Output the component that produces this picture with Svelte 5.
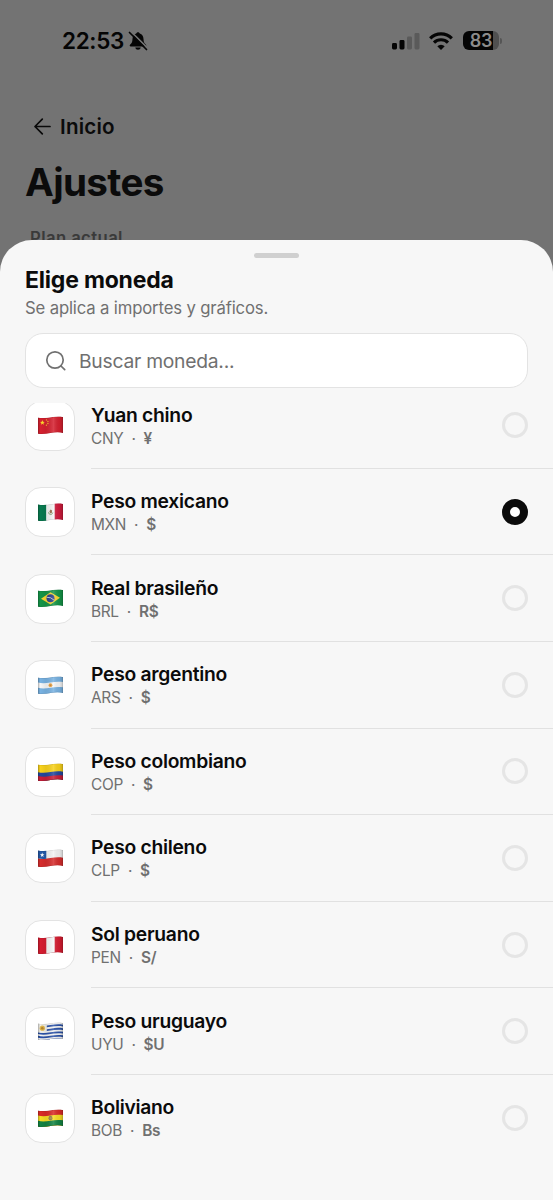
<script lang="ts">
    type Currency = { code: string; name: string; symbol: string };

    const currencies: Currency[] = [
        { code: "CNY", name: "Yuan chino", symbol: "¥" },
        { code: "MXN", name: "Peso mexicano", symbol: "$" },
        { code: "BRL", name: "Real brasileño", symbol: "R$" },
        { code: "ARS", name: "Peso argentino", symbol: "$" },
        { code: "COP", name: "Peso colombiano", symbol: "$" },
        { code: "CLP", name: "Peso chileno", symbol: "$" },
        { code: "PEN", name: "Sol peruano", symbol: "S/" },
        { code: "UYU", name: "Peso uruguayo", symbol: "$U" },
        { code: "BOB", name: "Boliviano", symbol: "Bs" },
    ];

    let selected = $state("MXN");
    let query = $state("");

    const visible = $derived(
        currencies.filter((c) => `${c.name} ${c.code}`.toLowerCase().includes(query.toLowerCase()))
    );

    // Horizontal bands, top to bottom: [colour, start offset].
    const bands: Record<string, [string, number][]> = {
        CNY: [["#d5202f", 0]],
        BRL: [["#149447", 0]],
        ARS: [["#78b2e2", 0], ["#f5f6f7", 5.2], ["#78b2e2", 10.4]],
        COP: [["#f8d21c", 0], ["#24489e", 7.8], ["#ca1e38", 11.7]],
        CLP: [["#f3f3f3", 0], ["#d52c2c", 7.8]],
        UYU: [0, 1, 2, 3, 4, 5, 6, 7, 8].map((i) => [i % 2 ? "#2b52a8" : "#f4f4f4", i * 1.78]),
        BOB: [["#d92a27", 0], ["#f6dc24", 5.2], ["#128343", 10.4]],
    };

    const wave = "M0 1.4C4 2.4 8 2.1 12.5 1.3S21 .2 25 .9V25H0Z";
    const outline = "M0 1.4C4 2.4 8 2.1 12.5 1.3S21 .2 25 .9V16.9C21 15.9 17 16.2 12.5 17S4 18.4 0 17.7Z";
</script>

{#snippet flag(code: string)}
    <svg class="flag" viewBox="0 0 25 18.5" aria-hidden="true">
        <defs>
            <clipPath id="clip-{code}"><path d={outline} /></clipPath>
            <linearGradient id="shade-{code}">
                <stop offset="0" stop-color="#000" stop-opacity=".22" />
                <stop offset=".1" stop-color="#000" stop-opacity="0" />
                <stop offset=".3" stop-color="#000" stop-opacity=".06" />
                <stop offset=".62" stop-color="#fff" stop-opacity=".14" />
                <stop offset=".85" stop-color="#000" stop-opacity=".05" />
                <stop offset="1" stop-color="#000" stop-opacity=".2" />
            </linearGradient>
        </defs>
        <g clip-path="url(#clip-{code})">
            {#each bands[code] ?? [] as [color, y]}
                <path d={wave} fill={color} transform="translate(0 {y})" />
            {/each}
            {#if code === "CNY"}
                <path d="M4.4 4.1l.6 1.7 1.8.1-1.4 1.1.5 1.8-1.500-1-1.500 1 .5-1.800L2 5.900l1.800-.1z" fill="#fddc2c" />
                <circle cx="8.4" cy="3.9" r=".65" fill="#f8c22d" />
                <circle cx="9.9" cy="5.4" r=".65" fill="#f8c22d" />
                <circle cx="9.9" cy="7.5" r=".65" fill="#f8c22d" />
                <circle cx="8.4" cy="9.2" r=".65" fill="#f8c22d" />
            {:else if code === "MXN"}
                <path d="M0 0H8.4V19H0z" fill="#087a50" />
                <path d="M8.4 0h8.3v19H8.4z" fill="#f4f4f3" />
                <path d="M16.7 0H25v19h-8.3z" fill="#cf1b3c" />
                <path d="M10.600 9.300c.2 2.800 3.500 3.100 4.200.2" fill="none" stroke="#6d9660" stroke-width=".9" />
                <path d="M11.400 8.200l1.200-1.700 1.500 1-.3 2.600-1.500.5z" fill="#95704b" />
            {:else if code === "BRL"}
                <path d="M3 9.700L12.500 3.200 22 8.800 12.500 15.500z" fill="#f8d632" />
                <circle cx="12.5" cy="9.3" r="4" fill="#293f8d" />
                <path d="M8.800 8.300q4-.4 7.100 2.700" fill="none" stroke="#dfe8e9" stroke-width=".8" />
            {:else if code === "ARS"}
                <circle cx="12.5" cy="9.2" r="1.9" fill="#e9a545" />
                <circle cx="12.5" cy="9.2" r=".8" fill="#c77d38" />
            {:else if code === "CLP"}
                <path d="M0 0h8.300v9.700Q4 10.300 0 9.200z" fill="#2459a8" />
                <path d="M4.200 3.500l.6 1.700h1.700L5.100 6.300l.5 1.700-1.400-1-1.400 1 .5-1.700-1.400-1.100h1.700z" fill="#fff" />
            {:else if code === "PEN"}
                <path d="M0 0h25v19H0z" fill="#d51c30" />
                <path d="M8.300 0h8.400v19H8.300z" fill="#f6f6f6" />
            {:else if code === "UYU"}
                <path d="M0 0h8.800v10.200Q4 11.100 0 10.200z" fill="#f1f0ea" />
                <circle cx="4.3" cy="6.2" r="2.6" fill="#dfb64c" />
                <circle cx="4.3" cy="6.2" r="1.3" fill="#b58532" />
            {:else if code === "BOB"}
                <circle cx="12.5" cy="9.2" r="2.1" fill="#b28d44" />
                <path d="M11 8.200q1.500-1.700 3 0M11.200 10q1.300 1.500 2.600 0" fill="none" stroke="#5e7954" stroke-width=".7" />
            {/if}
            <path d={outline} fill="url(#shade-{code})" />
            <path d={outline} fill="none" stroke="#000" stroke-opacity=".2" stroke-width=".7" />
        </g>
    </svg>
{/snippet}

<div class="screen">
    <div class="status">
        <div class="clock">
            <span>22:53</span>
            <svg width="20" height="20" viewBox="0 0 20 20" aria-hidden="true">
                <path d="M10 1.200c-.9 0-1.600.6-1.700 1.400C5.800 3.300 4.600 5.400 4.500 8c-.1 3.200-.8 4.200-2.300 5.500-.9.8-.6 2 .6 2h14.400c1.200 0 1.500-1.200.6-2-1.500-1.300-2.200-2.300-2.300-5.500-.1-2.600-1.300-4.700-3.800-5.400-.1-.8-.8-1.400-1.700-1.400zM7.300 16.600h5.400c-.3 1.400-1.300 2.200-2.700 2.200s-2.400-.8-2.700-2.200z" fill="#050505" />
                <path d="M3.200.7L19.600 17.100" stroke="#737373" stroke-width="1.600" />
                <path d="M1.500 1.500L18.500 18.500" stroke="#050505" stroke-width="1.700" stroke-linecap="round" />
            </svg>
        </div>
        <div class="indicators">
            <svg width="28" height="18" viewBox="0 0 28 18" aria-hidden="true">
                <rect x="0" y="11" width="5" height="6.500" rx="1.400" fill="#050505" />
                <rect x="7.500" y="8" width="5" height="9.500" rx="1.400" fill="#050505" />
                <rect x="15" y="4.500" width="5" height="13" rx="1.400" fill="#5a5a5a" />
                <rect x="22.500" y="1" width="5" height="16.500" rx="1.400" fill="#5a5a5a" />
            </svg>
            <svg width="24" height="18" viewBox="0 0 24 18" aria-hidden="true">
                <g fill="none" stroke="#050505" stroke-width="3.200">
                    <path d="M1.200 6.300a15.300 15.300 0 0 1 21.600 0" />
                    <path d="M5 10.600a10 10 0 0 1 14 0" />
                </g>
                <path d="M12 18l-3.700-3.800a5.300 5.300 0 0 1 7.400 0z" fill="#050505" />
            </svg>
            <div class="battery">
                <div class="cell">83</div>
                <i></i>
            </div>
        </div>
    </div>

    <div class="page">
        <div class="back">
            <svg width="20" height="20" viewBox="0 0 20 20" fill="none" stroke="#090909" stroke-width="1.700" stroke-linecap="round" stroke-linejoin="round" aria-hidden="true">
                <path d="M17 9.500H2M9.300 2.200L2 9.500l7.300 7.300" />
            </svg>
            <span>Inicio</span>
        </div>
        <h1>Ajustes</h1>
        <p class="section">Plan actual</p>
    </div>

    <div class="sheet" role="dialog" aria-label="Elige moneda">
        <div class="grabber"></div>
        <header>
            <h2>Elige moneda</h2>
            <p>Se aplica a importes y gráficos.</p>
            <label class="search">
                <svg width="22" height="22" viewBox="0 0 22 22" fill="none" stroke="#707070" stroke-width="1.700" stroke-linecap="round" aria-hidden="true">
                    <circle cx="10" cy="10" r="8.200" />
                    <path d="M16 16l3.700 3.700" />
                </svg>
                <input type="text" placeholder="Buscar moneda..." bind:value={query} />
            </label>
        </header>
        <div class="list">
            <div class="rows" role="radiogroup">
                {#each visible as c (c.code)}
                    <button class="row" type="button" role="radio" aria-checked={selected === c.code} onclick={() => (selected = c.code)}>
                        <span class="tile">{@render flag(c.code)}</span>
                        <span class="body">
                            <span class="text">
                                <span class="name">{c.name}</span>
                                <span class="meta"><span>{c.code}</span><span>·</span><b>{c.symbol}</b></span>
                            </span>
                            <span class="radio" class:on={selected === c.code}></span>
                        </span>
                    </button>
                {/each}
            </div>
        </div>
    </div>
</div>

<style>
    :global(body) {
        margin: 0;
    }

    .screen {
        display: flex;
        flex-direction: column;
        box-sizing: border-box;
        height: 1200px;
        overflow: hidden;
        background: #737373;
        font-family: Inter, "Liberation Sans", sans-serif;
        color: #0b0b0b;
    }

    .status {
        display: flex;
        flex: none;
        align-items: center;
        justify-content: space-between;
        height: 81px;
        padding: 0 51px 0 62px;
    }

    .clock {
        display: flex;
        align-items: center;
        gap: 4px;
        font-size: 22.5px;
        font-weight: 600;
        letter-spacing: -.35px;
        color: #050505;
    }

    .indicators {
        display: flex;
        align-items: center;
        gap: 9px;
    }

    .battery {
        display: flex;
        align-items: center;
        gap: 1px;
        margin-left: 1px;
    }

    .cell {
        width: 36px;
        height: 19px;
        border-radius: 6px;
        background: linear-gradient(90deg, #050505 83%, #505050 83%);
        color: #8c8c8c;
        font-size: 18px;
        font-weight: 600;
        line-height: 19px;
        letter-spacing: -.3px;
        text-align: center;
    }

    .battery i {
        width: 2px;
        height: 6px;
        border-radius: 0 3px 3px 0;
        background: #555;
    }

    .page {
        flex: none;
        box-sizing: border-box;
        height: 159px;
        padding: 32px 25px 0;
        overflow: hidden;
    }

    .back {
        display: flex;
        align-items: center;
        gap: 7px;
        height: 27px;
        padding-left: 8px;
        font-size: 20.6px;
        font-weight: 600;
        letter-spacing: .2px;
    }

    h1 {
        margin: 17px 0 0;
        font-size: 38.6px;
        line-height: 50px;
        font-weight: 700;
        letter-spacing: -.65px;
    }

    .section {
        margin: 20px 0 0 5px;
        font-size: 16.7px;
        line-height: 22px;
        font-weight: 600;
        letter-spacing: .4px;
        color: #3a3a3a;
    }

    .sheet {
        display: flex;
        flex: 1;
        flex-direction: column;
        min-height: 0;
        background: #f7f7f7;
        border-radius: 32px 32px 0 0;
    }

    .grabber {
        flex: none;
        width: 45px;
        height: 5px;
        margin: 13px auto 0;
        border-radius: 3px;
        background: #d0d0d0;
    }

    header {
        flex: none;
        padding: 7px 25px 0;
    }

    h2 {
        margin: 0;
        font-size: 23px;
        line-height: 30px;
        font-weight: 700;
        letter-spacing: -.2px;
    }

    header p {
        margin: 2px 0 0;
        font-size: 16.7px;
        line-height: 22px;
        letter-spacing: -.15px;
        color: #707070;
    }

    .search {
        display: flex;
        align-items: center;
        gap: 12px;
        box-sizing: border-box;
        height: 55px;
        margin-top: 14px;
        padding: 0 19px;
        background: #fff;
        border: 1px solid #e3e3e3;
        border-radius: 18px;
    }

    .search input {
        flex: 1;
        min-width: 0;
        padding: 0;
        border: 0;
        outline: 0;
        background: none;
        font: inherit;
        font-size: 19.3px;
        letter-spacing: -.25px;
        color: #0b0b0b;
    }

    .search input::placeholder {
        color: #707070;
        opacity: 1;
    }

    .list {
        flex: 1;
        min-height: 0;
        margin-top: 15px;
        overflow: hidden;
    }

    /* list is resting slightly scrolled under the search field */
    .rows {
        margin-top: -20.8px;
    }

    .row {
        display: flex;
        align-items: center;
        gap: 16px;
        width: 100%;
        height: 86.6px;
        padding: 0 0 0 25px;
        border: 0;
        background: none;
        font: inherit;
        color: inherit;
        text-align: left;
        cursor: pointer;
    }

    .tile {
        display: grid;
        place-items: center;
        flex: none;
        box-sizing: border-box;
        width: 50px;
        height: 50px;
        background: #fff;
        border: 1px solid #e3e3e3;
        border-radius: 16px;
    }

    .flag {
        width: 25px;
        height: 18.5px;
    }

    .body {
        display: flex;
        flex: 1;
        align-items: center;
        justify-content: space-between;
        box-sizing: border-box;
        height: 100%;
        padding-right: 25px;
        border-bottom: 1px solid #e1e1e1;
    }

    .row:last-child .body {
        border-bottom-color: transparent;
    }

    .text {
        display: flex;
        flex-direction: column;
        padding-top: 1px;
    }

    .name {
        font-size: 19.3px;
        line-height: 25px;
        font-weight: 600;
        letter-spacing: -.28px;
    }

    .meta {
        display: flex;
        gap: 8px;
        font-size: 15.4px;
        line-height: 21px;
        letter-spacing: -.3px;
        color: #707070;
    }

    .meta b {
        font-weight: 600;
    }

    .radio {
        box-sizing: border-box;
        width: 26px;
        height: 26px;
        border: 3px solid #e5e5e5;
        border-radius: 50%;
    }

    .radio.on {
        border: 8px solid #0b0b0b;
        background: #fff;
    }
</style>
